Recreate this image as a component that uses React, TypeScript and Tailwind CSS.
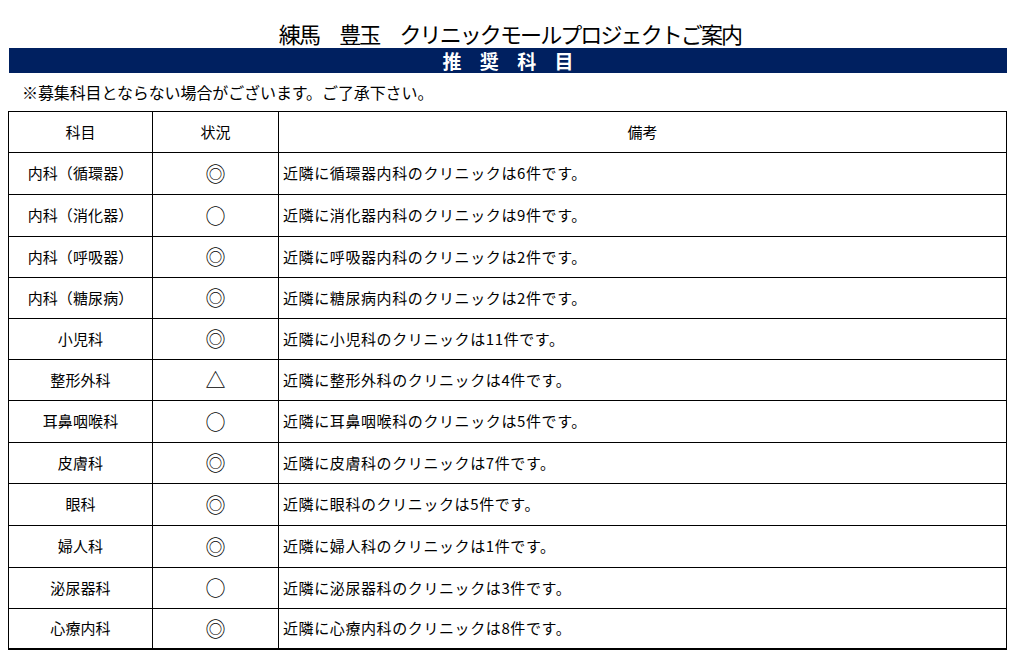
import React from 'react';

// Row data for the recommended department table
const rows: Array<{ name: string; mark: string; note: string; h: number }> = [
  { name: '内科（循環器）', mark: '◎', note: '近隣に循環器内科のクリニックは6件です。', h: 42 },
  { name: '内科（消化器）', mark: '○', note: '近隣に消化器内科のクリニックは9件です。', h: 42 },
  { name: '内科（呼吸器）', mark: '◎', note: '近隣に呼吸器内科のクリニックは2件です。', h: 41 },
  { name: '内科（糖尿病）', mark: '◎', note: '近隣に糖尿病内科のクリニックは2件です。', h: 41 },
  { name: '小児科', mark: '◎', note: '近隣に小児科のクリニックは11件です。', h: 41 },
  { name: '整形外科', mark: '△', note: '近隣に整形外科のクリニックは4件です。', h: 41 },
  { name: '耳鼻咽喉科', mark: '○', note: '近隣に耳鼻咽喉科のクリニックは5件です。', h: 42 },
  { name: '皮膚科', mark: '◎', note: '近隣に皮膚科のクリニックは7件です。', h: 41 },
  { name: '眼科', mark: '◎', note: '近隣に眼科のクリニックは5件です。', h: 42 },
  { name: '婦人科', mark: '◎', note: '近隣に婦人科のクリニックは1件です。', h: 42 },
  { name: '泌尿器科', mark: '○', note: '近隣に泌尿器科のクリニックは3件です。', h: 41 },
  { name: '心療内科', mark: '◎', note: '近隣に心療内科のクリニックは8件です。', h: 41 },
];

const font = { fontFamily: '"Noto Sans CJK JP", "Noto Sans", sans-serif' };

export default function App() {
  return (
    <div className="w-[1018px] h-[671px] bg-white text-black overflow-hidden" style={font}>
      {/* Title */}
      <div className="h-[48px] flex items-end justify-center pb-[1px]">
        <span className="text-[22px] leading-[28px] tracking-[-1.9px] pl-[2px]">
          練馬　豊玉　クリニックモールプロジェクトご案内
        </span>
      </div>

      {/* Banner */}
      <div className="ml-[9px] w-[998px] h-[25px] bg-[#002060] flex items-center justify-center">
        <span className="text-white font-bold text-[19px] leading-none tracking-[7px] pl-[7px]">推 奨 科 目</span>
      </div>

      {/* Note */}
      <div className="h-[38px] pl-[22px] pt-[7px] text-[16px] leading-[24px] tracking-[-0.1px]">
        ※募集科目とならない場合がございます。ご了承下さい。
      </div>

      {/* Table */}
      <div className="ml-[8px] w-[999px] border-t border-l border-r border-black text-[15px]">
        <div className="grid grid-cols-[144px_126px_1fr] h-[41px] border-b border-black">
          <div className="flex items-center justify-center border-r border-black">科目</div>
          <div className="flex items-center justify-center border-r border-black">状況</div>
          <div className="flex items-center justify-center">備考</div>
        </div>
        {rows.map((r, i) => (
          <div
            key={r.name}
            className={`grid grid-cols-[144px_126px_1fr] border-black ${i === rows.length - 1 ? 'border-b-2' : 'border-b'}`}
            style={{ height: r.h }}
          >
            <div className="flex items-center justify-center border-r border-black tracking-[0.1px]">{r.name}</div>
            <div className="flex items-center justify-center border-r border-black text-[20px]">{r.mark}</div>
            <div className="flex items-center pl-[4px] tracking-[0.6px]">{r.note}</div>
          </div>
        ))}
      </div>
    </div>
  );
}
